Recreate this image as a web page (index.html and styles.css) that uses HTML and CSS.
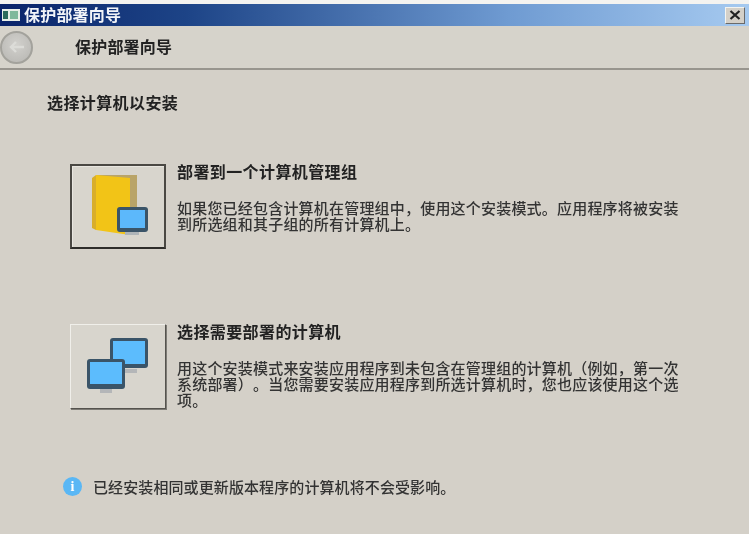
FILE: index.html
```html
<!DOCTYPE html>
<html lang="zh-CN">
<head>
    <meta charset="UTF-8">
    <title>保护部署向导</title>
    <link rel="stylesheet" href="styles.css">
</head>
<body>
    <div class="window">
        <div class="titlebar">
            <svg class="app-icon" width="18" height="12" viewBox="0 0 18 12">
                <rect width="18" height="12" fill="#e8eee8"/>
                <rect x="1" y="2" width="5" height="8" fill="#2c6a5c"/>
                <rect x="8" y="2" width="8" height="8" fill="#7fb89c"/>
            </svg>
            <span class="title-text">保护部署向导</span>
            <button class="close-btn">
                <svg width="12" height="10" viewBox="0 0 12 10">
                    <path d="M1.5 1 L10.5 9 M10.5 1 L1.5 9" stroke="#222" stroke-width="2.2"/>
                </svg>
            </button>
        </div>

        <div class="header">
            <div class="back-btn">
                <svg width="16" height="12" viewBox="0 0 16 12">
                    <path d="M7 1 L2 6 L7 11 M2 6 H15" fill="none" stroke="#dcdcd8" stroke-width="2.4"/>
                </svg>
            </div>
            <h1 class="header-title">保护部署向导</h1>
        </div>

        <div class="content">
            <h2 class="section-title">选择计算机以安装</h2>

            <div class="option first">
                <button class="option-btn pressed">
                    <svg width="92" height="81" viewBox="0 0 92 81">
                        <path d="M24 9 L65 9 L65 64 L50 64 Z" fill="#b9a468"/>
                        <path d="M24 9 L58 12 L58 69 L24 64 Z" fill="#f2c417"/>
                        <path d="M24 9 L20 12 L20 62 L24 64 Z" fill="#d9ae2a"/>
                        <rect x="53" y="66" width="14" height="3" fill="#aeb4b8"/>
                        <rect x="45" y="41" width="31" height="25" rx="3" fill="#3a5468"/>
                        <rect x="48" y="44" width="25" height="18" fill="#5cb8fb"/>
                    </svg>
                </button>
                <div class="option-text">
                    <h3 class="option-title">部署到一个计算机管理组</h3>
                    <p class="option-desc">如果您已经包含计算机在管理组中，使用这个安装模式。应用程序将被安装到所选组和其子组的所有计算机上。</p>
                </div>
            </div>

            <div class="option second">
                <button class="option-btn">
                    <svg width="92" height="83" viewBox="0 0 92 83">
                        <rect x="51" y="44" width="14" height="4" fill="#b4b6b8"/>
                        <rect x="38" y="13" width="38" height="30" rx="3" fill="#3a5468"/>
                        <rect x="41" y="16" width="32" height="23" fill="#5cbcfd"/>
                        <rect x="28" y="64" width="12" height="4" fill="#b4b6b8"/>
                        <rect x="15" y="34" width="38" height="30" rx="3" fill="#3a5468"/>
                        <rect x="18" y="37" width="32" height="22" fill="#5cbcfd"/>
                    </svg>
                </button>
                <div class="option-text">
                    <h3 class="option-title">选择需要部署的计算机</h3>
                    <p class="option-desc">用这个安装模式来安装应用程序到未包含在管理组的计算机（例如，第一次系统部署）。当您需要安装应用程序到所选计算机时，您也应该使用这个选项。</p>
                </div>
            </div>

            <div class="note">
                <span class="info-icon">i</span>
                <span class="note-text">已经安装相同或更新版本程序的计算机将不会受影响。</span>
            </div>
        </div>
    </div>
</body>
</html>
```

FILE: styles.css
```css
html, body {
    margin: 0;
    padding: 0;
    height: 100%;
    overflow: hidden;
    background-color: #d4d0c8;
}

body {
    font-family: "Noto Sans CJK SC", "Liberation Sans", sans-serif;
    color: #222;
    text-spacing-trim: space-all;
}

h1, h2, h3, p {
    margin: 0;
}

.window {
    width: 749px;
    height: 534px;
    box-sizing: border-box;
    padding-top: 4px;
    background-color: #d4d0c8;
    filter: blur(0.55px);
    box-shadow: inset 0 4px 0 #f4f3f0;
}

.titlebar {
    display: flex;
    align-items: center;
    height: 22px;
    padding: 0 4px 0 2px;
    background: linear-gradient(to right, #0a246a 0%, #1d4487 25%, #6f9bd2 68%, #a6caf0 100%);
}

.app-icon {
    flex: none;
}

.title-text {
    margin-left: 4px;
    padding-bottom: 2px;
    font-size: 16px;
    line-height: 20px;
    font-weight: 700;
    letter-spacing: 0.2px;
    color: #f2f4f8;
}

.close-btn {
    display: flex;
    align-items: center;
    justify-content: center;
    margin-left: auto;
    width: 20px;
    height: 17px;
    padding: 0;
    background-color: #d4d0c8;
    border: 1px solid;
    border-color: #f4f4f0 #6a6a6a #6a6a6a #f4f4f0;
}

.header {
    display: flex;
    align-items: center;
    height: 42px;
    background-color: #d6d3cb;
    border-bottom: 2px solid #98958e;
}

.back-btn {
    display: flex;
    align-items: center;
    justify-content: center;
    flex: none;
    box-sizing: border-box;
    width: 33px;
    height: 33px;
    border-radius: 50%;
    border: 2px solid #a3a29c;
    background: radial-gradient(circle at 50% 40%, #d2d1cd, #b6b5b1);
}

.header-title {
    margin-left: 42px;
    padding-bottom: 2px;
    font-size: 16px;
    letter-spacing: 0.2px;
    font-weight: 700;
}

.content {
    padding: 22px 0 0 47px;
}

.section-title {
    font-size: 16px;
    letter-spacing: 0.4px;
    font-weight: 700;
    line-height: 20px;
}

.option {
    display: flex;
    width: 640px;
    margin-left: 23px;
}

.option.first {
    margin-top: 52px;
}

.option.second {
    margin-top: 75px;
}

.option-btn {
    display: flex;
    align-items: center;
    justify-content: center;
    flex: none;
    box-sizing: border-box;
    width: 96px;
    height: 85px;
    padding: 0;
    background-color: #d8d5cd;
    border: 1px solid;
    border-color: #f0efea #55534e #55534e #f0efea;
    box-shadow: 1px 1px 0 #7d7b75;
}

.option-btn.pressed {
    border: 2px solid #4a4843;
    border-bottom-color: #2e2d2a;
    box-shadow: inset 1px 1px 0 #e8e6e0;
}

.option-text {
    margin-left: 11px;
    width: 510px;
}

.option-title {
    margin-top: -3px;
    font-size: 16px;
    letter-spacing: 0.4px;
    font-weight: 700;
    line-height: 20px;
}

.option-desc {
    margin-top: 19px;
    font-size: 15px;
    font-weight: 500;
    letter-spacing: 0.2px;
    line-height: 16px;
    color: #333;
}

.note {
    display: flex;
    align-items: center;
    margin: 67px 0 0 16px;
}

.info-icon {
    display: flex;
    align-items: center;
    justify-content: center;
    width: 19px;
    height: 19px;
    border-radius: 50%;
    background-color: #5ab7f5;
    color: #fff;
    font-size: 14px;
    font-weight: 700;
    font-family: "Liberation Serif", serif;
}

.note-text {
    margin-left: 11px;
    font-size: 15px;
    font-weight: 500;
    letter-spacing: 0.1px;
    color: #333;
}
```
